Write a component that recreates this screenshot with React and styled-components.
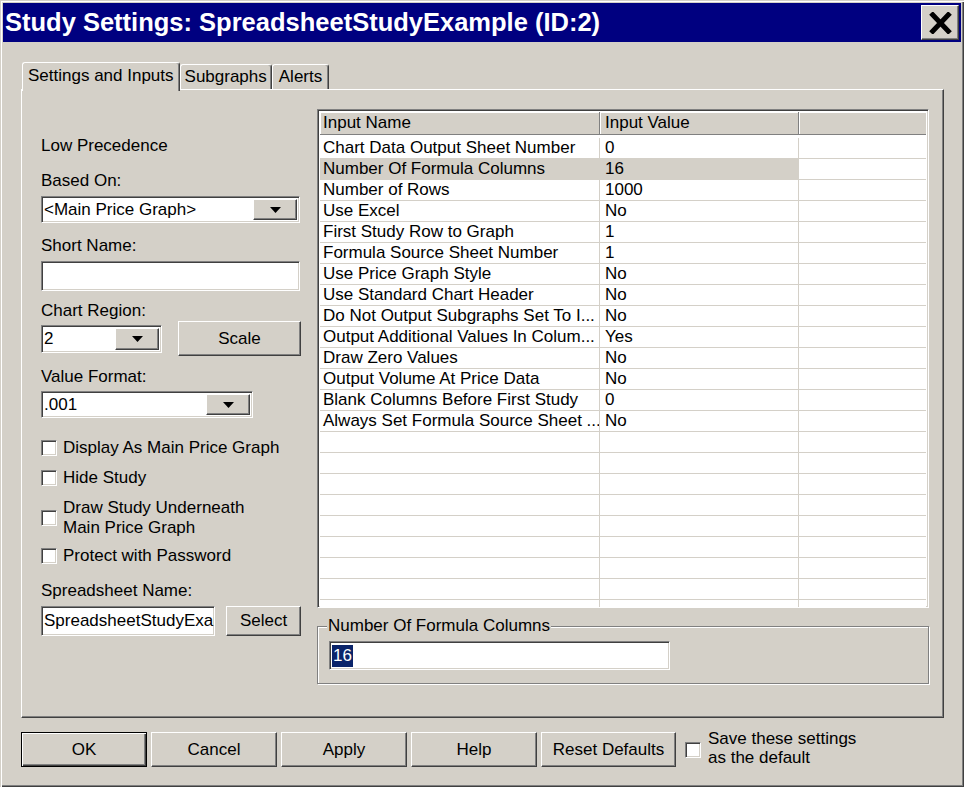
import React from 'react';
import styled, { createGlobalStyle, css } from 'styled-components';

const GRAY = '#d4d0c8';

const Global = createGlobalStyle`
  html, body { margin: 0; padding: 0; background: ${GRAY}; }
  body { font-family: "Liberation Sans", Arial, sans-serif; font-size: 17px; color: #000; }
  * { box-sizing: border-box; }
`;

const raised = css`
  background: ${GRAY};
  border: 1px solid;
  border-color: #fff #404040 #404040 #fff;
  box-shadow: inset -1px -1px #808080, inset 1px 1px ${GRAY};
`;

const sunken = css`
  background: #fff;
  border: 1px solid;
  border-color: #808080 #fff #fff #808080;
  box-shadow: inset 1px 1px #404040, inset -1px -1px ${GRAY};
`;

const Window = styled.div`
  width: 964px;
  height: 787px;
  background: ${GRAY};
  padding: 3px;
  box-shadow: inset 1px 1px ${GRAY}, inset 2px 2px #fff, inset -1px -1px #404040, inset -2px -2px #808080;
  display: flex;
  flex-direction: column;
`;

const TitleBar = styled.div`
  height: 39px;
  background: #000080;
  display: flex;
  align-items: center;
  justify-content: space-between;
  padding: 0 2px 0 2px;
`;

const TitleText = styled.div`
  color: #fff;
  font-weight: bold;
  font-size: 25.5px;
  white-space: nowrap;
`;

const CloseButton = styled.div`
  ${raised};
  width: 38px;
  height: 35px;
  display: flex;
  align-items: center;
  justify-content: center;
`;

const Body = styled.div`
  padding: 20px 17px 0 18px;
  display: flex;
  flex-direction: column;
`;

const TabRow = styled.div`
  display: flex;
  align-items: flex-end;
  height: 27px;
  padding-left: 1px;
`;

const Tab = styled.div`
  position: relative;
  z-index: ${p => (p.$active ? 2 : 1)};
  height: ${p => (p.$active ? 29 : 25)}px;
  margin-bottom: ${p => (p.$active ? -2 : 0)}px;
  padding: ${p => (p.$active ? `3px ${p.$pad}px 0` : `0 ${p.$pad}px`)};
  background: ${GRAY};
  border-top: 1px solid #fff;
  border-left: 1px solid #fff;
  border-right: 1px solid #404040;
  box-shadow: inset -1px 0 #808080;
  border-radius: 3px 3px 0 0;
  display: flex;
  align-items: ${p => (p.$active ? 'flex-start' : 'center')};
  line-height: 20px;
  white-space: nowrap;
`;

const Panel = styled.div`
  height: 629px;
  background: ${GRAY};
  border: 1px solid;
  border-color: #fff #404040 #404040 #fff;
  box-shadow: inset -1px -1px #808080;
  padding: 19px 14px 0 19px;
  display: flex;
  gap: 16px;
`;

const LeftCol = styled.div`
  width: 260px;
  display: flex;
  flex-direction: column;
`;

const Label = styled.div`
  line-height: 20px;
  margin-top: ${p => p.$mt || 0}px;
  white-space: nowrap;
`;

const Combo = styled.div`
  ${sunken};
  width: ${p => p.$w}px;
  height: ${p => p.$h || 27}px;
  margin-top: ${p => p.$mt || 0}px;
  display: flex;
  align-items: stretch;
  padding: 2px;
`;

const ComboText = styled.div`
  flex: 1;
  display: flex;
  align-items: center;
  white-space: nowrap;
  overflow: hidden;
`;

const DropButton = styled.div`
  ${raised};
  width: 44px;
  display: flex;
  align-items: center;
  justify-content: center;
`;

const TextInput = styled.div`
  ${sunken};
  width: ${p => p.$w}px;
  height: ${p => p.$h || 30}px;
  margin-top: ${p => p.$mt || 0}px;
  display: flex;
  align-items: center;
  padding: 0 2px;
  white-space: nowrap;
  overflow: hidden;
`;

const Row = styled.div`
  display: flex;
  align-items: center;
  justify-content: space-between;
  margin-top: ${p => p.$mt || 0}px;
`;

const PushButton = styled.div`
  ${raised};
  width: ${p => p.$w}px;
  height: ${p => p.$h || 35}px;
  display: flex;
  align-items: center;
  justify-content: center;
  white-space: nowrap;
  ${p =>
    p.$default &&
    css`
      border: 1px solid #000;
      box-shadow: inset 1px 1px #fff, inset -1px -1px #404040, inset -2px -2px #808080;
    `}
`;

const CheckRow = styled.div`
  display: flex;
  align-items: center;
  gap: ${p => p.$gap || 6}px;
  margin-top: ${p => p.$mt || 0}px;
  margin-left: ${p => p.$ml || 0}px;
  line-height: ${p => p.$lh || 20}px;
`;

const CheckBox = styled.div`
  ${sunken};
  width: 16px;
  height: 16px;
  flex: none;
`;

const RightCol = styled.div`
  flex: 1;
  display: flex;
  flex-direction: column;
`;

const TableFrame = styled.div`
  ${sunken};
  height: 499px;
  padding: 2px;
  overflow: hidden;
`;

const Grid = styled.div`
  display: grid;
  grid-template-columns: 280px 199px 1fr;
`;

const HeadCell = styled.div`
  height: 23px;
  background: ${GRAY};
  border-right: ${p => (p.$last ? 'none' : '1px solid #808080')};
  border-bottom: 1px solid #808080;
  box-shadow: inset 1px 1px #fff;
  padding-left: ${p => p.$pad}px;
  line-height: 22px;
  white-space: nowrap;
`;

const Spacer = styled.div`
  grid-column: 1 / -1;
  height: 3px;
`;

const Cell = styled.div`
  height: 21px;
  line-height: 20px;
  border-bottom: 1px solid ${GRAY};
  border-right: ${p => (p.$last ? 'none' : `1px solid ${GRAY}`)};
  background: ${p => (p.$sel ? GRAY : '#fff')};
  padding-left: ${p => p.$pad}px;
  white-space: nowrap;
  overflow: hidden;
`;

const GroupBox = styled.div`
  position: relative;
  margin-top: 18px;
  height: 58px;
  border: 1px solid #808080;
  box-shadow: inset 1px 1px #fff, 1px 1px #fff;
  padding: 14px 11px;
`;

const Legend = styled.div`
  position: absolute;
  top: -11px;
  left: 9px;
  padding: 0 1px;
  background: ${GRAY};
  line-height: 20px;
  white-space: nowrap;
`;

const Selected = styled.span`
  background: #0a246a;
  color: #fff;
  line-height: 22px;
  padding: 0 1px;
`;

const ButtonBar = styled.div`
  display: flex;
  align-items: center;
  gap: 4px;
  margin-top: 14px;
`;

const SaveText = styled.span`
  margin-top: -3px;
`;

const Arrow = () => (
  <svg width="11" height="6" viewBox="0 0 11 6">
    <polygon points="0,0 11,0 5.5,6" fill="#000" />
  </svg>
);

const rows = [
  ['Chart Data Output Sheet Number', '0'],
  ['Number Of Formula Columns', '16', true],
  ['Number of Rows', '1000'],
  ['Use Excel', 'No'],
  ['First Study Row to Graph', '1'],
  ['Formula Source Sheet Number', '1'],
  ['Use Price Graph Style', 'No'],
  ['Use Standard Chart Header', 'No'],
  ['Do Not Output Subgraphs Set To I...', 'No'],
  ['Output Additional Values In Colum...', 'Yes'],
  ['Draw Zero Values', 'No'],
  ['Output Volume At Price Data', 'No'],
  ['Blank Columns Before First Study', '0'],
  ['Always Set Formula Source Sheet ...', 'No'],
];
while (rows.length < 23) rows.push(['', '']);

export default function App() {
  return (
    <>
      <Global />
      <Window>
        <TitleBar>
          <TitleText>Study Settings: SpreadsheetStudyExample (ID:2)</TitleText>
          <CloseButton>
            <svg width="23" height="22" viewBox="0 0 23 22">
              <path d="M2 1 L21 21 M21 1 L2 21" stroke="#000" strokeWidth="5" />
            </svg>
          </CloseButton>
        </TitleBar>
        <Body>
          <TabRow>
            <Tab $active $pad={5}>Settings and Inputs</Tab>
            <Tab $pad={4}>Subgraphs</Tab>
            <Tab $pad={6}>Alerts</Tab>
          </TabRow>
          <Panel>
            <LeftCol>
              <Label $mt={27}>Low Precedence</Label>
              <Label $mt={15}>Based On:</Label>
              <Combo $w={259} $mt={5}>
                <ComboText>&lt;Main Price Graph&gt;</ComboText>
                <DropButton><Arrow /></DropButton>
              </Combo>
              <Label $mt={13}>Short Name:</Label>
              <TextInput $w={259} $mt={5} />
              <Label $mt={10}>Chart Region:</Label>
              <Row>
                <Combo $w={121} $h={28}>
                  <ComboText>2</ComboText>
                  <DropButton><Arrow /></DropButton>
                </Combo>
                <PushButton $w={123}>Scale</PushButton>
              </Row>
              <Label $mt={11}>Value Format:</Label>
              <Combo $w={212} $mt={4}>
                <ComboText>.001</ComboText>
                <DropButton><Arrow /></DropButton>
              </Combo>
              <CheckRow $mt={20}><CheckBox /><span>Display As Main Price Graph</span></CheckRow>
              <CheckRow $mt={10}><CheckBox /><span>Hide Study</span></CheckRow>
              <CheckRow $mt={10}><CheckBox /><span>Draw Study Underneath<br />Main Price Graph</span></CheckRow>
              <CheckRow $mt={8}><CheckBox /><span>Protect with Password</span></CheckRow>
              <Label $mt={15}>Spreadsheet Name:</Label>
              <Row $mt={5}>
                <TextInput $w={174}>SpreadsheetStudyExample</TextInput>
                <PushButton $w={75} $h={30}>Select</PushButton>
              </Row>
            </LeftCol>
            <RightCol>
              <TableFrame>
                <Grid>
                  <HeadCell $pad={3}>Input Name</HeadCell>
                  <HeadCell $pad={5}>Input Value</HeadCell>
                  <HeadCell $last />
                  <Spacer />
                  {rows.map(([n, v, sel], i) => (
                    <React.Fragment key={i}>
                      <Cell $pad={3} $sel={sel}>{n}</Cell>
                      <Cell $pad={5} $sel={sel}>{v}</Cell>
                      <Cell $last />
                    </React.Fragment>
                  ))}
                </Grid>
              </TableFrame>
              <GroupBox>
                <Legend>Number Of Formula Columns</Legend>
                <TextInput $w={341} $h={29}><Selected>16</Selected></TextInput>
              </GroupBox>
            </RightCol>
          </Panel>
          <ButtonBar>
            <PushButton $w={126} $default>OK</PushButton>
            <PushButton $w={126}>Cancel</PushButton>
            <PushButton $w={126}>Apply</PushButton>
            <PushButton $w={126}>Help</PushButton>
            <PushButton $w={135}>Reset Defaults</PushButton>
            <CheckRow $ml={5} $gap={7} $lh={19}>
              <CheckBox />
              <SaveText>Save these settings<br />as the default</SaveText>
            </CheckRow>
          </ButtonBar>
        </Body>
      </Window>
    </>
  );
}
